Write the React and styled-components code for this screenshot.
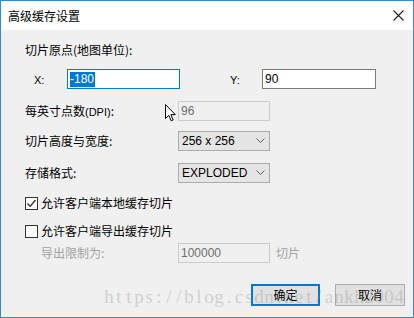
import React from 'react';
import styled, { createGlobalStyle } from 'styled-components';

const GlobalStyle = createGlobalStyle`
  html, body {
    margin: 0;
    padding: 0;
    background: #f0f0f0;
  }
  body {
    font-family: "Noto Sans CJK SC", "Liberation Sans", sans-serif;
    font-size: 12px;
    color: #000;
  }
`;

const Dialog = styled.div`
  position: relative;
  width: 414px;
  height: 318px;
  box-sizing: border-box;
  border: 1px solid #2f8ad8;
  background: #f0f0f0;
  display: flex;
  flex-direction: column;
  overflow: hidden;
`;

const TitleBar = styled.div`
  height: 29px;
  flex-shrink: 0;
  background: #fff;
  display: flex;
  align-items: center;
  justify-content: space-between;
  padding: 0 9px 0 7px;
  font-size: 12px;
`;

const Body = styled.div`
  padding: 12px 0 0 24px;
  display: flex;
  flex-direction: column;
`;

const Row = styled.div`
  display: flex;
  align-items: center;
  height: ${p => p.$h || 20}px;
  margin-top: ${p => p.$mt || 0}px;
  position: relative;
  flex-shrink: 0;
`;

const Label = styled.span`
  box-sizing: border-box;
  width: ${p => p.$w ? p.$w + 'px' : 'auto'};
  padding-left: ${p => p.$pl || 0}px;
  flex-shrink: 0;
  color: ${p => p.$disabled ? '#a3a3a3' : '#000'};
  line-height: 16px;
  white-space: nowrap;
`;

const Small = styled.span`
  font-family: "Liberation Sans", sans-serif;
  font-size: 11px;
`;

const Input = styled.div`
  box-sizing: border-box;
  width: ${p => p.$w}px;
  height: 20px;
  border: 1px solid ${p => p.$focus ? '#0078d7' : p.$disabled ? '#cccccc' : '#7a7a7a'};
  background: ${p => p.$disabled ? '#f0f0f0' : '#fff'};
  color: ${p => p.$disabled ? '#6d6d6d' : '#000'};
  font-family: "Liberation Sans", sans-serif;
  font-size: 12px;
  display: flex;
  align-items: center;
  padding-left: 2px;
`;

const Selected = styled.span`
  background: #0078d7;
  color: #fff;
  line-height: 15px;
  padding-right: 1px;
`;

const Select = styled.div`
  box-sizing: border-box;
  width: 92px;
  height: 20px;
  border: 1px solid #acacac;
  background: #e5e5e5;
  font-family: "Liberation Sans", sans-serif;
  font-size: 12px;
  display: flex;
  align-items: center;
  justify-content: space-between;
  padding: 0 4px 0 3px;
`;

const Check = styled.span`
  box-sizing: border-box;
  width: 13px;
  height: 13px;
  border: 1px solid #333;
  background: #fff;
  margin-right: 3px;
  display: flex;
  align-items: center;
  justify-content: center;
`;

const Footer = styled.div`
  display: flex;
  justify-content: flex-end;
  gap: 15px;
  padding-right: 8px;
  margin-top: 21px;
`;

const Button = styled.div`
  box-sizing: border-box;
  width: ${p => p.$w}px;
  height: 22px;
  background: #e1e1e1;
  border: 1px solid ${p => p.$primary ? '#0078d7' : '#adadad'};
  box-shadow: ${p => p.$primary ? 'inset 0 0 0 1px #0078d7' : 'none'};
  display: flex;
  align-items: center;
  justify-content: center;
  font-size: 12px;
  line-height: 16px;
`;

const Cursor = styled.svg`
  position: absolute;
  left: 140px;
  top: 3px;
`;

const Watermark = styled.div`
  position: absolute;
  left: 103px;
  top: 286px;
  display: flex;
  font-family: "Liberation Serif", serif;
  font-size: 19px;
  line-height: 20px;
  color: rgba(140, 140, 140, 0.34);
  pointer-events: none;
  white-space: nowrap;
`;

const Cell = styled.span`
  width: 10px;
  text-align: center;
`;

const Chevron = () => (
  <svg width="9" height="6" viewBox="0 0 9 6">
    <path d="M0.5 0.5 L4.5 4.5 L8.5 0.5" fill="none" stroke="#606060" strokeWidth="1" />
  </svg>
);

const WATERMARK = 'https://blog.csdn.net/ankh2004';

export default function App() {
  return (
    <>
      <GlobalStyle />
      <Dialog>
        <TitleBar>
          <span>高级缓存设置</span>
          <svg width="11" height="11" viewBox="0 0 11 11">
            <path d="M0.5 0.5 L10.5 10.5 M10.5 0.5 L0.5 10.5" stroke="#222" strokeWidth="1.1" />
          </svg>
        </TitleBar>
        <Body>
          <Row $h={16}>
            <Label>切片原点(地图单位):</Label>
          </Row>
          <Row $mt={11}>
            <Label $w={42} $pl={9}><Small>X:</Small></Label>
            <Input $w={113} $focus><Selected>-180</Selected></Input>
            <Label $w={82} $pl={50}><Small>Y:</Small></Label>
            <Input $w={114}>90</Input>
          </Row>
          <Row $mt={12}>
            <Label $w={153}>每英寸点数<Small>(DPI)</Small>:</Label>
            <Input $w={92} $disabled>96</Input>
            <Cursor width="11" height="18" viewBox="0 0 11 18">
              <path d="M0.5 0.5 L0.5 14.5 L3.8 11.3 L6.2 16.8 L8.2 15.9 L5.9 10.6 L10.3 10.6 Z" fill="#fff" stroke="#000" strokeWidth="1" />
            </Cursor>
          </Row>
          <Row $mt={10}>
            <Label $w={153}>切片高度与宽度:</Label>
            <Select><span>256 x 256</span><Chevron /></Select>
          </Row>
          <Row $mt={12}>
            <Label $w={153}>存储格式:</Label>
            <Select><span>EXPLODED</span><Chevron /></Select>
          </Row>
          <Row $h={16} $mt={12}>
            <Check>
              <svg width="11" height="11" viewBox="0 0 11 11">
                <path d="M1.5 5.5 L4.2 8.3 L9.5 2" fill="none" stroke="#222" strokeWidth="1.2" />
              </svg>
            </Check>
            <Label>允许客户端本地缓存切片</Label>
          </Row>
          <Row $h={16} $mt={12}>
            <Check />
            <Label>允许客户端导出缓存切片</Label>
          </Row>
          <Row $mt={4}>
            <Label $w={153} $pl={16} $disabled>导出限制为:</Label>
            <Input $w={92} $disabled>100000</Input>
            <Label $pl={6} $disabled>切片</Label>
          </Row>
        </Body>
        <Footer>
          <Button $w={69} $primary>确定</Button>
          <Button $w={70}>取消</Button>
        </Footer>
        <Watermark aria-label={WATERMARK}>
          {WATERMARK.split('').map((c, i) => <Cell key={i}>{c}</Cell>)}
        </Watermark>
      </Dialog>
    </>
  );
}
